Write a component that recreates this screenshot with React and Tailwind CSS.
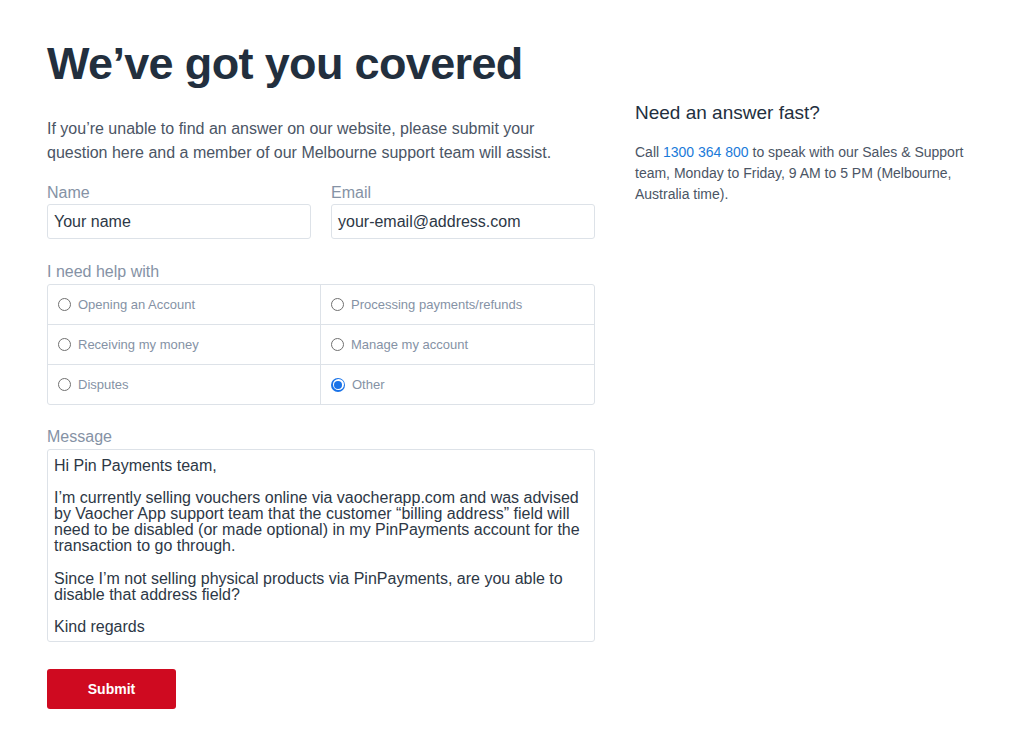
const OPTIONS = [
  ['Opening an Account', 'Processing payments/refunds'],
  ['Receiving my money', 'Manage my account'],
  ['Disputes', 'Other'],
]

function Radio({ checked }) {
  return checked ? (
    <span className="flex h-[14px] w-[14px] items-center justify-center rounded-full bg-[#1a73e8]">
      <span className="flex h-[11px] w-[11px] items-center justify-center rounded-full bg-white">
        <span className="h-[8px] w-[8px] rounded-full bg-[#1a73e8]" />
      </span>
    </span>
  ) : (
    <span className="h-[13px] w-[13px] rounded-full border border-[#707070] bg-white" />
  )
}

export default function App() {
  return (
    <div className="min-h-[748px] bg-white font-['Liberation_Sans',Arial,sans-serif]">
      <div className="flex pl-[47px] pt-[41px]">
        {/* form column */}
        <div className="w-[548px]">
          <h1 className="text-[45px] font-bold leading-none tracking-[-0.65px] text-[#222f3e]">
            We’ve got you covered
          </h1>
          <p className="mt-[31px] text-[16px] leading-[24px] text-[#4b5565]">
            If you’re unable to find an answer on our website, please submit your<br />
            question here and a member of our Melbourne support team will assist.
          </p>

          <div className="mt-[16px] grid grid-cols-2 gap-5">
            <div>
              <div className="text-[16px] leading-[23px] text-[#8592a5]">Name</div>
              <div className="flex h-[35px] items-center rounded-[3px] border border-[#dde2e8] px-[6px] text-[16px] text-[#2d3846]">Your name</div>
            </div>
            <div>
              <div className="text-[16px] leading-[23px] text-[#8592a5]">Email</div>
              <div className="flex h-[35px] items-center rounded-[3px] border border-[#dde2e8] px-[6px] text-[16px] text-[#2d3846]">your-email@address.com</div>
            </div>
          </div>

          <div className="mt-[21px] mb-px text-[16px] leading-[23px] text-[#8592a5]">I need help with</div>
          <div className="overflow-hidden rounded-[3px] border border-[#dde2e8]">
            {OPTIONS.map((row, r) => (
              <div key={r} className={`grid grid-cols-[272px_1fr] ${r > 0 ? 'border-t border-[#dde2e8]' : ''}`}>
                {row.map((label, c) => (
                  <div
                    key={label}
                    className={`flex h-[39px] items-center gap-[7px] pl-[10px] text-[13px] text-[#8592a5] ${c === 1 ? 'border-l border-[#dde2e8]' : ''}`}
                  >
                    <Radio checked={label === 'Other'} />
                    <span>{label}</span>
                  </div>
                ))}
              </div>
            ))}
          </div>

          <div className="mt-5 mb-px text-[16px] leading-[23px] text-[#8592a5]">Message</div>
          <div className="h-[193px] rounded-[3px] border border-[#dde2e8] px-[6px] pt-[8px] text-[16px] leading-[16.1px] text-[#2d3846]">
            <p>Hi Pin Payments team,</p>
            <p className="mt-[16.1px]">
              I’m currently selling vouchers online via vaocherapp.com and was advised<br />
              by Vaocher App support team that the customer “billing address” field will<br />
              need to be disabled (or made optional) in my PinPayments account for the<br />
              transaction to go through.
            </p>
            <p className="mt-[16.1px]">
              Since I’m not selling physical products via PinPayments, are you able to<br />
              disable that address field?
            </p>
            <p className="mt-[16.1px]">Kind regards</p>
          </div>

          <button className="mt-[27px] h-[40px] w-[129px] rounded-[3px] bg-[#cf0a20] text-[14px] font-bold text-white">
            Submit
          </button>
        </div>

        {/* side column */}
        <div className="ml-[40px] pt-[60px]">
          <h2 className="text-[19px] leading-[24px] text-[#222f3e]">Need an answer fast?</h2>
          <p className="mt-[17px] text-[14px] leading-[21px] text-[#4b5565]">
            Call <span className="text-[#1a7ad9]">1300 364 800</span> to speak with our Sales &amp; Support<br />
            team, Monday to Friday, 9 AM to 5 PM (Melbourne,<br />
            Australia time).
          </p>
        </div>
      </div>
    </div>
  )
}
